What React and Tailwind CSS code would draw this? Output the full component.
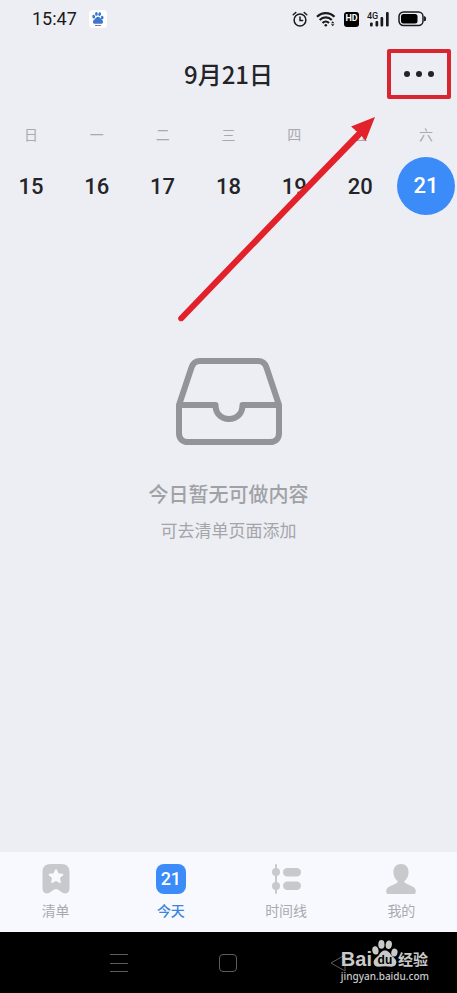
import { clsx } from "clsx";

const week = [
  { label: "日", day: 15 },
  { label: "一", day: 16 },
  { label: "二", day: 17 },
  { label: "三", day: 18 },
  { label: "四", day: 19 },
  { label: "五", day: 20 },
  { label: "六", day: 21 },
];

const tabs = [
  { label: "清单", icon: ListIcon },
  { label: "今天", icon: TodayIcon, active: true },
  { label: "时间线", icon: TimelineIcon },
  { label: "我的", icon: ProfileIcon },
];

function Paw({ className }) {
  return (
    <svg viewBox="0 0 26 27" className={className} fill="currentColor">
      <ellipse cx="3.4" cy="10.4" rx="3.1" ry="4.2" transform="rotate(-12 3.4 10.4)" />
      <ellipse cx="9.4" cy="4.4" rx="3.1" ry="4.3" />
      <ellipse cx="16.8" cy="4.7" rx="3.1" ry="4.3" transform="rotate(10 16.8 4.7)" />
      <ellipse cx="22.4" cy="12.6" rx="3.1" ry="4" transform="rotate(14 22.4 12.6)" />
      <path d="M13 10.600c3.400 0 4.600 2.400 6.600 4.800 2 2.200 5 3.800 4.800 7.200-.2 3-2.600 4.200-5 4.100-2-.1-4.400-.5-6.400-.5s-4.400.5-6.400.5c-2.800 0-5-1.500-5-4.300 0-3.200 3-4.900 5-7 2-2.400 3-4.800 6.400-4.800z" />
    </svg>
  );
}

function ListIcon() {
  return (
    <svg viewBox="0 0 30 30" className="size-[30px]">
      <path
        fill="#c8c9cd"
        d="M9.500 0h11c5.200 0 8 2.800 8 8v16.500c0 4.200-3.300 6-6.800 4.300-1.800-.9-2.900-2.200-4.500-3.100-1.500-.9-2.900-.9-4.400 0-1.600.9-2.700 2.200-4.500 3.100-3.500 1.700-6.800-.1-6.800-4.300V8c0-5.200 2.800-8 8-8z"
      />
      <path
        fill="#f8f9fe"
        stroke="#f8f9fe"
        strokeWidth="1.5"
        strokeLinejoin="round"
        d="M15 5.800l2 4.200 4.600.6-3.400 3.200.9 4.600-4.100-2.200-4.100 2.200.9-4.600-3.400-3.200L13 10z"
      />
    </svg>
  );
}

function TodayIcon() {
  return (
    <span className="flex size-[30px] items-center justify-center rounded-lg bg-[#3b8bf9] font-['Roboto',sans-serif] text-lg font-medium text-white">
      21
    </span>
  );
}

function TimelineIcon() {
  return (
    <svg viewBox="0 0 30 30" className="size-[30px]" fill="#c8c9cd">
      <rect x="4" y="0" width="2" height="30" rx="1" />
      <circle cx="5" cy="8" r="4" />
      <circle cx="5" cy="22" r="4" />
      <rect x="12" y="4" width="18" height="8.5" rx="4.2" />
      <rect x="12" y="17.5" width="18" height="8.5" rx="4.2" />
    </svg>
  );
}

function ProfileIcon() {
  return (
    <svg viewBox="0 0 30 30" className="size-[30px]" fill="#c8c9cd">
      <path d="M15 0c4.600 0 7.600 3.200 7.600 8 0 3.600-1.400 6.600-3.600 8.600-.8.800-.8 1.900.2 2.400l7.300 3.500c2 1 3 2.300 3.300 4.200.3 2.100-.6 3.300-2.600 3.300H2.800c-2 0-2.900-1.200-2.600-3.300.3-1.900 1.300-3.200 3.300-4.200l7.300-3.500c1-.5 1-1.600.2-2.400C8.800 14.600 7.400 11.600 7.400 8c0-4.800 3-8 7.600-8z" />
    </svg>
  );
}

function StatusBar() {
  return (
    <div className="flex h-[38px] items-center justify-between pr-[30px] pl-8 text-[#1a1a1c]">
      <div className="flex items-center gap-3">
        <span className="font-['Roboto',sans-serif] text-lg">15:47</span>
        <span className="flex size-[18px] flex-col items-center justify-center rounded bg-white">
          <Paw className="size-3 text-[#3d78cf]" />
          <span className="mt-px h-px w-[6px] bg-[#a06aa8]" />
        </span>
      </div>
      <div className="flex items-center gap-2">
        <svg viewBox="0 0 16 16" className="size-4" fill="none" stroke="currentColor" strokeWidth="1.5" strokeLinecap="round">
          <circle cx="8" cy="9" r="5.9" />
          <path d="M8 6v3.400h2.600M1.200 3.800l2.600-2.300M14.800 3.800l-2.600-2.300" />
        </svg>
        <svg viewBox="0 0 20 16" className="h-4 w-5" fill="none" stroke="currentColor" strokeWidth="2.2">
          <path d="M1 5.800C6 .8 13.500.8 18.500 5.800M3.700 9c3.500-3.400 8.600-3.400 12.100 0M6.500 12c1.900-1.800 4.700-1.800 6.500 0" />
          <circle cx="9.8" cy="14.2" r="1.3" fill="currentColor" stroke="none" />
          <path d="M15 12.200l1.700-2 1.700 2zM15 13.200l1.700 2 1.700-2z" fill="currentColor" stroke="none" />
        </svg>
        <span className="flex h-[15px] w-[15px] items-center justify-center rounded-[3px] bg-black font-['Roboto',sans-serif] text-[9px] font-bold text-white">
          HD
        </span>
        <svg viewBox="0 0 23 16" className="h-4 w-[23px]" fill="currentColor">
          <text x="0" y="8" fontSize="9" fontWeight="500" fontFamily="Roboto, sans-serif">4G</text>
          <rect x="3" y="11.5" width="2.7" height="4" rx="1" />
          <rect x="8.5" y="10" width="2.7" height="5.5" rx="1" />
          <rect x="13.5" y="6" width="2.7" height="9.5" rx="1" />
          <rect x="19" y="1" width="2.7" height="14.5" rx="1" />
        </svg>
        <svg viewBox="0 0 29 16" className="h-4 w-[29px]">
          <rect x="1" y="1" width="24" height="13.5" rx="4.5" fill="none" stroke="currentColor" strokeWidth="1.5" />
          <rect x="3" y="3" width="16.5" height="9.5" rx="2.5" fill="#000" />
          <path d="M26.600 5.500c1.400.6 1.400 4 0 4.600z" fill="currentColor" stroke="currentColor" />
        </svg>
      </div>
    </div>
  );
}

function Header() {
  return (
    <header className="grid grid-cols-[1fr_auto_1fr] items-center pt-[11px] pr-[6px]">
      <h1 className="col-start-2 pl-[6px] text-2xl leading-8 font-medium text-[#232427]">9月21日</h1>
      <button
        type="button"
        aria-label="更多"
        className="flex h-[50px] w-16 items-center justify-center gap-[6px] justify-self-end rounded-xs border-4 border-[#d9252f]"
      >
        <span className="size-[6px] rounded-full bg-[#232427]" />
        <span className="size-[6px] rounded-full bg-[#232427]" />
        <span className="size-[6px] rounded-full bg-[#232427]" />
      </button>
    </header>
  );
}

function WeekStrip() {
  return (
    <div className="-mx-[2px] mt-[25px] grid grid-cols-7">
      {week.map(({ label, day }) => (
        <div key={day} className="flex flex-col items-center gap-[13px]">
          <span className="text-sm leading-5 text-[#a9aaaf]">{label}</span>
          <button
            type="button"
            className={clsx(
              "size-[58px] rounded-full font-['Roboto',sans-serif] text-[22px] font-medium",
              day === 21 ? "bg-[#3b8bf9] pb-[2px] text-white" : "text-[#232427]"
            )}
          >
            {day}
          </button>
        </div>
      ))}
    </div>
  );
}

function EmptyState() {
  return (
    <main className="mt-[143px] flex flex-1 flex-col items-center">
      <svg viewBox="0 0 106 88" className="h-[88px] w-[106px]" fill="none" stroke="#939499" strokeWidth="6" strokeLinejoin="round">
        <path d="M3 47L15.500 9.500C17 4.600 19.500 3 24 3h58c4.500 0 7 1.600 8.500 6.500L103 47v28c0 6-3.500 9-9 9H12c-5.500 0-9-3-9-9z" />
        <path d="M3 47h36.500c0 8.500 5.500 14 13.500 14S66.500 55.500 66.500 47H103" />
      </svg>
      <p className="mt-[34px] text-xl leading-7 font-medium text-[#a0a1a4]">今日暂无可做内容</p>
      <p className="mt-2 text-[17px] leading-7 text-[#a4a5a9]">可去清单页面添加</p>
    </main>
  );
}

function TabBar() {
  return (
    <nav className="bg-[#f8f9fe]">
      <div className="-mx-[2px] grid h-20 grid-cols-4 pt-3">
        {tabs.map(({ label, icon: Icon, active }) => (
          <a
            key={label}
            href="#"
            className={clsx(
              "flex flex-col items-center gap-[6px] text-sm leading-5",
              active ? "font-medium text-[#3b85dd]" : "text-[#a9aaaf]"
            )}
          >
            <Icon />
            {label}
          </a>
        ))}
      </div>
    </nav>
  );
}

function Watermark() {
  return (
    <div className="absolute top-2 right-7 flex flex-col text-[#c9c9c9]">
      <div className="flex items-end">
        <span className="font-['Liberation_Sans',sans-serif] text-xl leading-6 font-bold">Bai</span>
        <span className="relative mb-1">
          <Paw className="h-[27px] w-[26px]" />
          <span className="absolute inset-x-0 bottom-0 text-center font-['Liberation_Sans',sans-serif] text-xs leading-[14px] font-bold text-black">
            du
          </span>
        </span>
        <span className="pb-[2px] text-[15px] leading-5 font-bold">经验</span>
      </div>
      <span className="-mt-[3px] font-['Noto_Sans',sans-serif] text-[10px] leading-4 font-medium">jingyan.baidu.com</span>
    </div>
  );
}

function SystemBar() {
  return (
    <div className="relative grid h-[61px] grid-cols-3 items-center justify-items-center bg-black px-16 text-[#5c5c5c]">
      <button type="button" aria-label="最近任务">
        <svg viewBox="0 0 18 18" className="size-[18px]" stroke="currentColor" strokeWidth="1">
          <path d="M0 .5h18M0 9.500h18M0 17.500h18" />
        </svg>
      </button>
      <button type="button" aria-label="主屏幕" className="size-[18px] rounded border border-current" />
      <button type="button" aria-label="返回">
        <svg viewBox="0 0 16 18" className="h-[18px] w-4" fill="none" stroke="currentColor" strokeLinejoin="round">
          <path d="M15 1v16L1 9z" />
        </svg>
      </button>
      <Watermark />
    </div>
  );
}

function Arrow() {
  return (
    <svg
      viewBox="0 0 200 210"
      className="pointer-events-none absolute top-[114px] right-[80px] h-[210px] w-[200px]"
      fill="#e2212a"
    >
      <path d="M1.900 202.500L103.700 96.500 180 17.500 174 12.500 198 3 188.500 27 184.800 22 112.300 96.500 6.300 206.500c-3 2.500-7-1.200-4.400-4z" />
    </svg>
  );
}

export default function App() {
  return (
    <div className="relative flex min-h-screen flex-col overflow-hidden bg-[#edeef4] font-['Noto_Sans_CJK_SC',sans-serif]">
      <StatusBar />
      <Header />
      <WeekStrip />
      <EmptyState />
      <TabBar />
      <SystemBar />
      <Arrow />
    </div>
  );
}
